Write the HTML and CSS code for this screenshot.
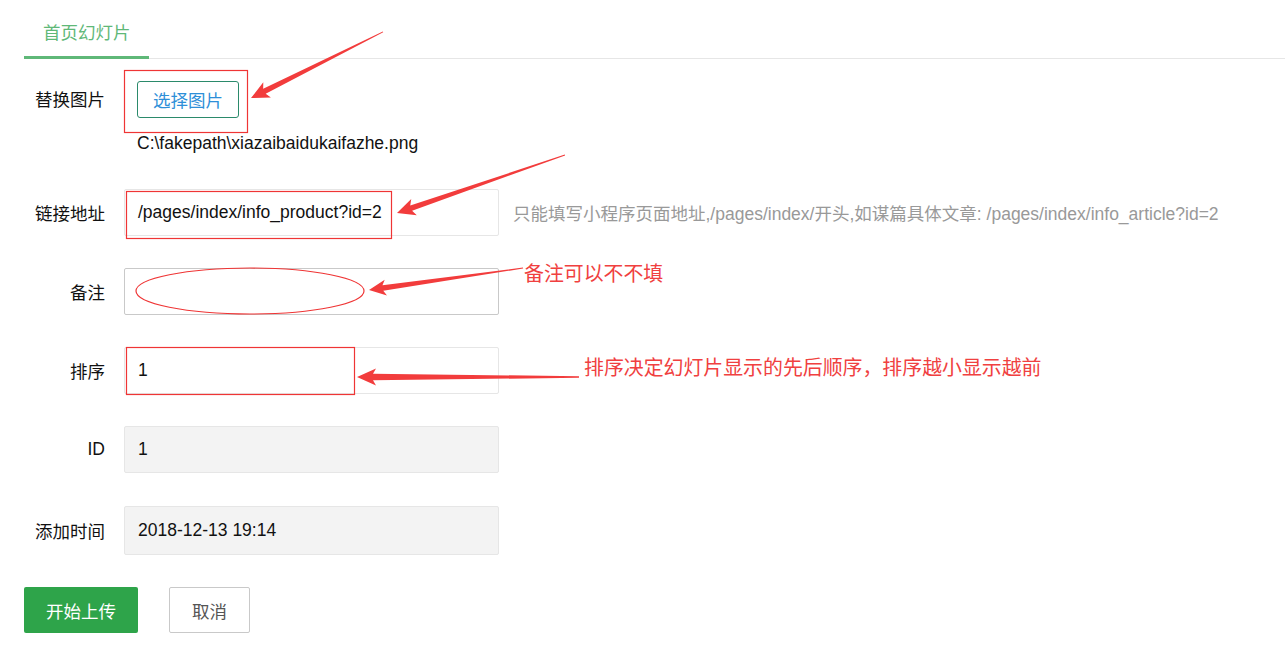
FILE: index.html
```html
<!DOCTYPE html>
<html lang="zh-CN">
<head>
<meta charset="utf-8">
<title>首页幻灯片</title>
<link rel="stylesheet" href="styles.css">
</head>
<body>
<div class="page">
  <div class="tabs">
    <ul class="tab-title">
      <li class="tab-item active">首页幻灯片</li>
    </ul>
  </div>

  <form class="form">
    <div class="row row-upload">
      <label class="label">替换图片</label>
      <div class="upload">
        <button type="button" class="btn-select">选择图片</button>
        <div class="filename">C:\fakepath\xiazaibaidukaifazhe.png</div>
      </div>
    </div>

    <div class="row row-link">
      <label class="label">链接地址</label>
      <div class="input">/pages/index/info_product?id=2</div>
      <div class="hint">只能填写小程序页面地址,/pages/index/开头,如谋篇具体文章: /pages/index/info_article?id=2</div>
    </div>

    <div class="row">
      <label class="label">备注</label>
      <div class="input input-hover"></div>
    </div>

    <div class="row">
      <label class="label">排序</label>
      <div class="input">1</div>
    </div>

    <div class="row">
      <label class="label">ID</label>
      <div class="input input-disabled">1</div>
    </div>

    <div class="row row-time">
      <label class="label">添加时间</label>
      <div class="input input-disabled">2018-12-13 19:14</div>
    </div>

    <div class="actions">
      <button type="button" class="btn btn-primary">开始上传</button>
      <button type="button" class="btn btn-default">取消</button>
    </div>
  </form>

  <svg class="marks" width="1285" height="655" viewBox="0 0 1285 655" xmlns="http://www.w3.org/2000/svg">
    <g fill="none" stroke="#ef3535" stroke-width="1.2">
      <rect x="124.5" y="70.5" width="123" height="62"/>
      <rect x="126.5" y="191.5" width="265" height="47"/>
      <ellipse cx="250" cy="291" rx="114" ry="23"/>
      <rect x="126.5" y="347.5" width="228" height="47"/>
    </g>
    <g fill="#f23c3c">
      <polygon transform="translate(251,98) rotate(-26.57)" points="0,0 18,-8.5 15,-2.8 147.6,-0.4 147.6,0.4 15,2.8 18,8.5"/>
      <polygon transform="translate(397,213) rotate(-19.05)" points="0,0 18,-8.5 15,-2.8 177.7,-0.4 177.7,0.4 15,2.8 18,8.5"/>
      <polygon transform="translate(369,290) rotate(-8.13)" points="0,0 17,-8 14,-2.8 155.6,-0.5 155.6,0.5 14,2.8 17,8"/>
      <polygon transform="translate(357,377)" points="0,0 19,-8.5 16,-3.2 222,-0.8 222,0.8 16,3.2 19,8.5"/>
    </g>
  </svg>
  <div class="note note-remark">备注可以不不填</div>
  <div class="note note-sort">排序决定幻灯片显示的先后顺序，排序越小显示越前</div>
</div>
</body>
</html>
```

FILE: styles.css
```css
* { box-sizing: border-box; }

html, body {
  margin: 0;
  padding: 0;
  background: #fff;
}

body {
  font-family: "Liberation Sans", "Noto Sans CJK SC", sans-serif;
  font-size: 17.5px;
  color: #111;
}

.page {
  position: relative;
  width: 1285px;
  height: 655px;
  padding-left: 24px;
  overflow: hidden;
}

.tabs {
  padding-top: 8px;
  border-bottom: 1px solid #e6e6e6;
}

.tab-title {
  list-style: none;
  margin: 0;
  padding: 0;
  display: flex;
}

.tab-item {
  position: relative;
  height: 50px;
  line-height: 50px;
  padding: 0 18.5px 0 19px;
  color: #5fb878;
}

.tab-item.active::after {
  content: "";
  position: absolute;
  left: 0;
  right: 0;
  bottom: -1px;
  height: 3px;
  background: #5fb878;
}

.form {
  padding-top: 22px;
}

.row {
  display: flex;
  align-items: center;
  margin-top: 32px;
}

.row-upload {
  margin-top: 0;
  align-items: flex-start;
}

.row-link {
  margin-top: 36px;
}

.row-time {
  margin-top: 33px;
}

.label {
  flex: 0 0 100px;
  width: 100px;
  padding-right: 19px;
  text-align: right;
  white-space: nowrap;
}

.row-upload .label {
  height: 39px;
  line-height: 39px;
}

.upload {
  padding-left: 13px;
}

.btn-select {
  display: block;
  width: 102px;
  height: 37px;
  padding: 0;
  border: 1px solid #2b8a6b;
  border-radius: 3px;
  background: #fff;
  color: #2e8fd8;
  font: inherit;
  font-size: 17.5px;
}

.filename {
  margin-top: 15px;
  line-height: 20px;
  color: #111;
}

.input {
  flex: 0 0 375px;
  width: 375px;
  height: 47px;
  line-height: 45px;
  padding-left: 13px;
  border: 1px solid #e6e6e6;
  border-radius: 2px;
  background: #fff;
  color: #111;
  white-space: nowrap;
}

.row-time .input {
  height: 49px;
  line-height: 47px;
}

.input-hover {
  border-color: #c9c9c9;
}

.input-disabled {
  background: #f3f3f3;
}

.hint {
  margin-left: 14px;
  color: #999;
  white-space: nowrap;
}

.actions {
  display: flex;
  gap: 31px;
  margin-top: 32px;
}

.btn {
  height: 46px;
  padding: 0 22px;
  border-radius: 2px;
  font: inherit;
  font-size: 17.5px;
  cursor: pointer;
}

.btn-primary {
  width: 114px;
  border: none;
  background: #2ea44a;
  color: #fff;
}

.btn-default {
  width: 81px;
  border: 1px solid #c9c9c9;
  background: #fff;
  color: #555;
}

.marks {
  position: absolute;
  left: 0;
  top: 0;
  pointer-events: none;
}

.note {
  position: absolute;
  font-family: "Noto Sans CJK SC", sans-serif;
  font-size: 19.9px;
  line-height: 20px;
  color: #f04040;
  white-space: nowrap;
}

.note-remark {
  left: 524px;
  top: 263px;
}

.note-sort {
  left: 584px;
  top: 357px;
}
```
